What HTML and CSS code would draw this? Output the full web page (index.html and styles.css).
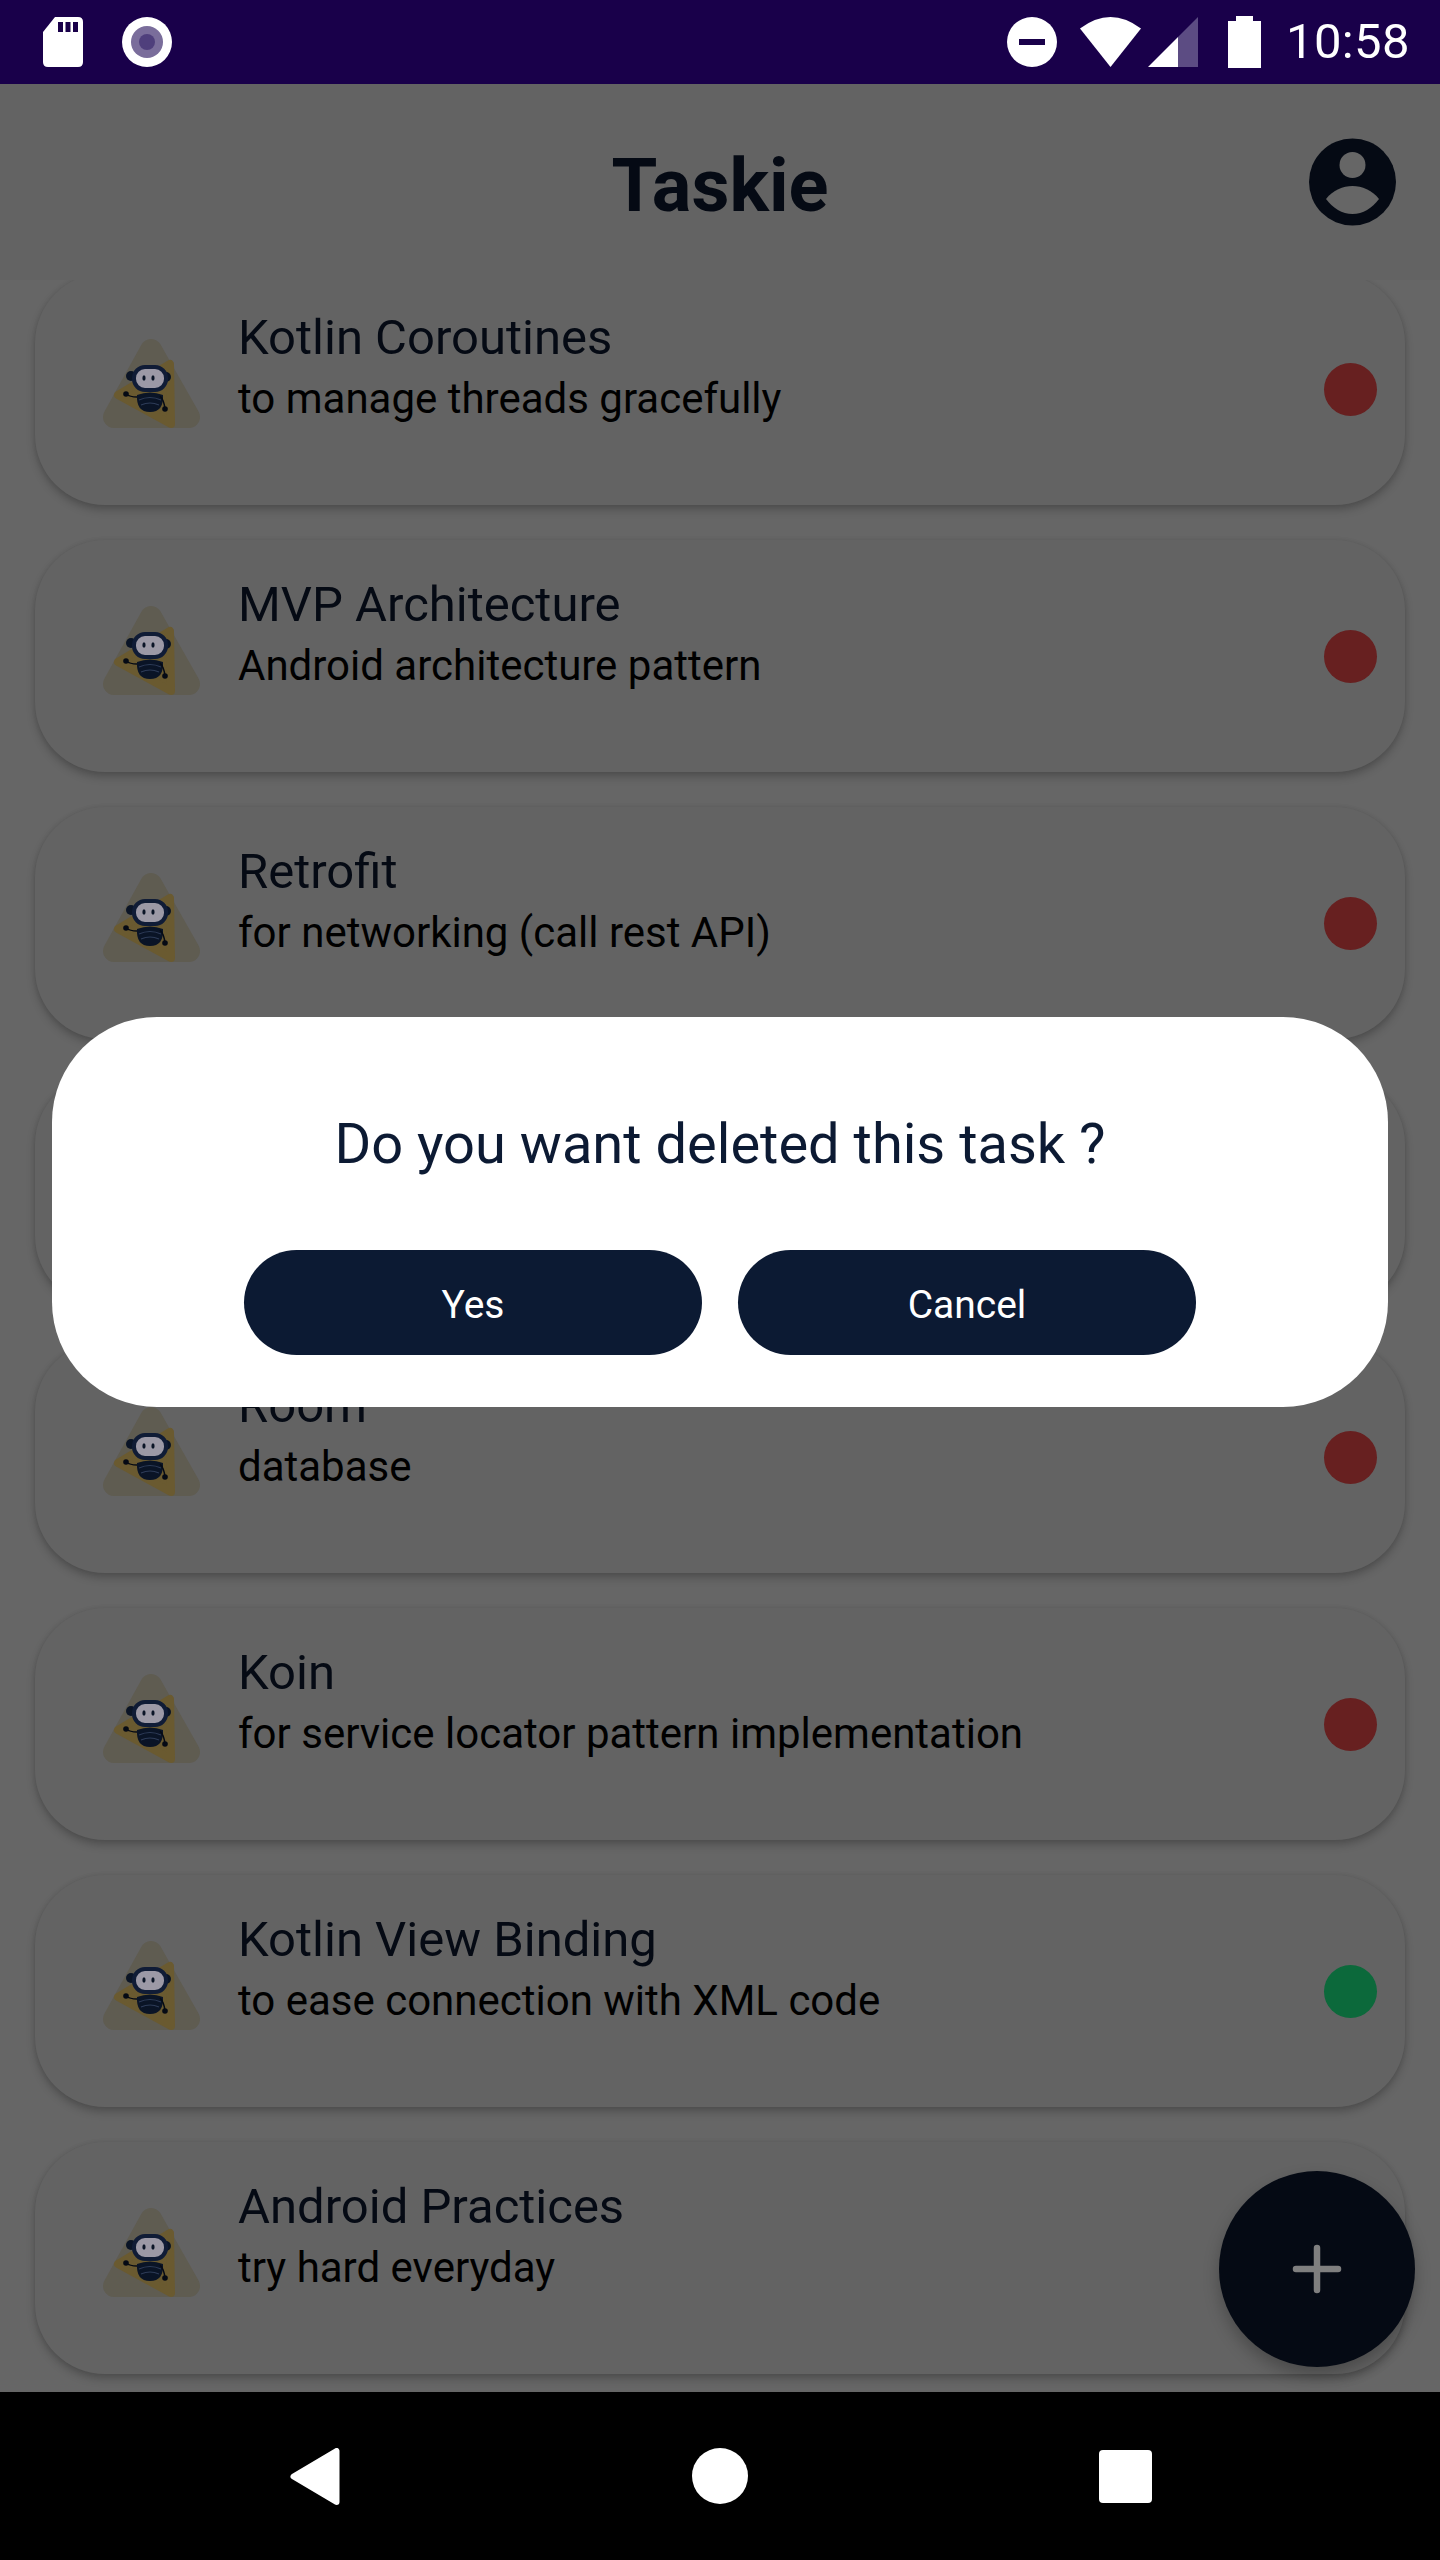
FILE: index.html

```html
<!DOCTYPE html>
<html lang="en">
<head>
  <meta charset="UTF-8">
  <title>Taskie</title>
  <link rel="stylesheet" href="styles.css">
</head>
<body>
  <svg class="defs" width="0" height="0">
    <symbol id="logo" viewBox="100 339 105 100">
      <polygon points="151,350 114,417 189,417" fill="#5f5c51" stroke="#5f5c51" stroke-width="22" stroke-linejoin="round"/>
      <polygon points="118,395 170,364 171,424" fill="#6a5a30" stroke="#6a5a30" stroke-width="8" stroke-linejoin="round"/>
      <circle cx="131" cy="376" r="5" fill="#0a1426"/>
      <circle cx="166" cy="377" r="5" fill="#0a1426"/>
      <rect x="134" y="367" width="32" height="23" rx="11" fill="#9c99a6" stroke="#101c36" stroke-width="4"/>
      <ellipse cx="144" cy="378" rx="1.6" ry="2.8" fill="#0a1426"/>
      <ellipse cx="153" cy="378" rx="1.6" ry="2.8" fill="#0a1426"/>
      <path d="M137 395 Q150 390 163 395 Q164 412 150 412 Q136 412 137 395 Z" fill="#0a1426"/>
      <path d="M139 400 Q150 395 161 400 M141 405 Q150 401 159 405" fill="none" stroke="#2e3c58" stroke-width="1.2"/>
      <path d="M126 394 Q130 397 137 397 M160 396 Q164 400 165 409" fill="none" stroke="#050a14" stroke-width="1.5"/>
      <circle cx="126" cy="394" r="2.8" fill="#050a14"/>
      <circle cx="165" cy="409" r="2.8" fill="#050a14"/>
    </symbol>
  </svg>

  <div class="phone">
    <div class="status-bar">
      <div class="status-left">
        <svg width="40" height="50" viewBox="0 0 40 50">
          <path d="M12 0H35q5 0 5 5V45q0 5-5 5H5q-5 0-5-5V15Z" fill="#fff"/>
          <path d="M15 5h5v10h-5zM22.500 5h5v10h-5zM30 5h5v10h-5z" fill="#19004a"/>
        </svg>
        <svg width="50" height="50" viewBox="0 0 50 50">
          <circle cx="25" cy="25" r="25" fill="#fff"/>
          <circle cx="25" cy="25" r="16" fill="#7a6d9b"/>
          <circle cx="25" cy="25" r="8" fill="#4f3f7c"/>
        </svg>
      </div>
      <div class="status-right">
        <svg width="50" height="50" viewBox="0 0 50 50">
          <circle cx="25" cy="25" r="25" fill="#fff"/>
          <rect x="12" y="22" width="26" height="6" fill="#19004a"/>
        </svg>
        <svg class="wifi" width="61" height="50" viewBox="0 0 61 50">
          <path d="M30.500 50L0 11.500Q30.500-11.500 61 11.500Z" fill="#fff"/>
        </svg>
        <svg class="signal" width="50" height="50" viewBox="0 0 50 50">
          <path d="M0 50L30 20V50Z" fill="#fff"/>
          <path d="M30 20L50 0V50H30Z" fill="#5c4c83"/>
        </svg>
        <svg class="battery" width="33" height="52" viewBox="0 0 33 52">
          <path d="M8 0H25V5H33V52H0V5H8Z" fill="#fff"/>
        </svg>
        <span class="clock">10:58</span>
      </div>
    </div>

    <main class="main">
      <header class="app-bar">
        <h1 class="app-title">Taskie</h1>
        <svg class="avatar" width="87" height="88" viewBox="0 0 87 88">
          <circle cx="43.500" cy="44" r="43.500" fill="#050a14"/>
          <circle cx="43.500" cy="27" r="13" fill="#666"/>
          <path d="M17 61C24 52 34 48 43.500 48S63 52 70 61C63 70 54 76 43.500 76S24 70 17 61Z" fill="#666"/>
        </svg>
      </header>

      <div class="task-list">
        <div class="task-scroll">
          <div class="task-card">
            <svg class="task-logo"><use href="#logo"/></svg>
            <div class="task-text">
              <div class="task-title">Kotlin Coroutines</div>
              <div class="task-desc">to manage threads gracefully</div>
            </div>
            <span class="dot dot-red"></span>
          </div>
          <div class="task-card">
            <svg class="task-logo"><use href="#logo"/></svg>
            <div class="task-text">
              <div class="task-title">MVP Architecture</div>
              <div class="task-desc">Android architecture pattern</div>
            </div>
            <span class="dot dot-red"></span>
          </div>
          <div class="task-card">
            <svg class="task-logo"><use href="#logo"/></svg>
            <div class="task-text">
              <div class="task-title">Retrofit</div>
              <div class="task-desc">for networking (call rest API)</div>
            </div>
            <span class="dot dot-red"></span>
          </div>
          <div class="task-card">
            <svg class="task-logo"><use href="#logo"/></svg>
            <div class="task-text"></div>
            <span class="dot dot-red"></span>
          </div>
          <div class="task-card">
            <svg class="task-logo"><use href="#logo"/></svg>
            <div class="task-text">
              <div class="task-title">Room</div>
              <div class="task-desc">database</div>
            </div>
            <span class="dot dot-red"></span>
          </div>
          <div class="task-card">
            <svg class="task-logo"><use href="#logo"/></svg>
            <div class="task-text">
              <div class="task-title">Koin</div>
              <div class="task-desc">for service locator pattern implementation</div>
            </div>
            <span class="dot dot-red"></span>
          </div>
          <div class="task-card">
            <svg class="task-logo"><use href="#logo"/></svg>
            <div class="task-text">
              <div class="task-title">Kotlin View Binding</div>
              <div class="task-desc">to ease connection with XML code</div>
            </div>
            <span class="dot dot-green"></span>
          </div>
          <div class="task-card">
            <svg class="task-logo"><use href="#logo"/></svg>
            <div class="task-text">
              <div class="task-title">Android Practices</div>
              <div class="task-desc">try hard everyday</div>
            </div>
            <span class="dot dot-red"></span>
          </div>
        </div>
      </div>

      <button class="fab">
        <svg width="50" height="50" viewBox="0 0 50 50">
          <path d="M25 4V46M4 25H46" fill="none" stroke="#7f7f7f" stroke-width="6.500" stroke-linecap="round"/>
        </svg>
      </button>

      <div class="dialog">
        <p class="dialog-text">Do you want deleted this task ?</p>
        <div class="dialog-actions">
          <button class="dialog-btn">Yes</button>
          <button class="dialog-btn">Cancel</button>
        </div>
      </div>
    </main>

    <nav class="nav-bar">
      <svg width="50" height="57" viewBox="0 0 50 57">
        <polygon points="3.500,28.500 46.500,3 46.500,54" fill="#fff" stroke="#fff" stroke-width="6" stroke-linejoin="round"/>
      </svg>
      <span class="nav-home"></span>
      <span class="nav-recent"></span>
    </nav>
  </div>
</body>
</html>
```

FILE: styles.css

```css
/* colours below are the dimmed ones, as they look behind the dialog */
* {
  box-sizing: border-box;
}
body {
  margin: 0;
  background: #000;
  font-family: Roboto, "Noto Sans", sans-serif;
}
.defs {
  position: absolute;
}
.phone {
  width: 1440px;
  height: 2560px;
  display: flex;
  flex-direction: column;
  overflow: hidden;
}

/* status bar */
.status-bar {
  height: 84px;
  flex: none;
  background: #19004a;
  display: flex;
  align-items: center;
  justify-content: space-between;
  padding: 0 30px 0 43px;
}
.status-left,
.status-right {
  display: flex;
  align-items: center;
}
.status-left {
  gap: 39px;
}
.wifi {
  margin-left: 23px;
}
.signal {
  margin-left: 7px;
}
.battery {
  margin-left: 30px;
}
.clock {
  margin-left: 25px;
  color: #fff;
  font-size: 49px;
  letter-spacing: 0.4px;
  line-height: 84px;
}

/* main area */
.main {
  flex: 1;
  position: relative;
  background: #666;
  display: flex;
  flex-direction: column;
  min-height: 0;
}
.app-bar {
  height: 196px;
  flex: none;
  background: #636363;
  display: grid;
  grid-template-columns: 1fr auto 1fr;
  align-items: center;
  padding: 0 44px;
}
.app-title {
  grid-column: 2;
  margin: 0;
  padding-top: 6px;
  color: #050a14;
  font-size: 74px;
  font-weight: 700;
}
.avatar {
  grid-column: 3;
  justify-self: end;
}

/* list */
.task-list {
  flex: 1;
  overflow: hidden;
  min-height: 0;
}
.task-scroll {
  margin-top: -7px;
  padding: 0 35px;
  display: flex;
  flex-direction: column;
  gap: 35px;
}
.task-card {
  height: 232px;
  flex: none;
  background: #636363;
  border-radius: 70px;
  box-shadow: 0 5px 8px rgba(0, 0, 0, 0.22), 0 0 4px rgba(0, 0, 0, 0.08);
  display: flex;
  align-items: center;
  padding: 0 28px 0 65px;
}
.task-logo {
  width: 105px;
  height: 100px;
  flex: none;
}
.task-text {
  flex: 1;
  align-self: flex-start;
  padding: 35px 0 0 33px;
}
.task-title {
  color: #050a14;
  font-size: 49px;
  line-height: 59px;
}
.task-desc {
  margin-top: 2px;
  color: #000;
  font-size: 42px;
  line-height: 59px;
}
.dot {
  width: 53px;
  height: 53px;
  flex: none;
  border-radius: 50%;
}
.dot-red {
  background: #672020;
}
.dot-green {
  background: #0c693b;
}

/* floating button */
.fab {
  position: absolute;
  right: 25px;
  bottom: 25px;
  width: 196px;
  height: 196px;
  border: none;
  border-radius: 50%;
  background: #050a14;
  box-shadow: 0 8px 16px rgba(0, 0, 0, 0.25);
  display: flex;
  align-items: center;
  justify-content: center;
  padding: 0;
}

/* dialog */
.dialog {
  position: absolute;
  top: 933px;
  left: 52px;
  right: 52px;
  height: 390px;
  background: #fff;
  border-radius: 105px;
  padding-top: 96px;
  display: flex;
  flex-direction: column;
  align-items: center;
}
.dialog-text {
  margin: 0;
  color: #0c1a33;
  font-size: 56px;
  line-height: 62px;
}
.dialog-actions {
  margin-top: 75px;
  display: flex;
  gap: 36px;
}
.dialog-btn {
  width: 458px;
  height: 105px;
  border: none;
  border-radius: 53px;
  background: #0c1a33;
  color: #fff;
  font-family: inherit;
  font-size: 39px;
  padding: 5px 0 0;
}

/* navigation bar */
.nav-bar {
  height: 168px;
  flex: none;
  background: #000;
  display: grid;
  grid-template-columns: repeat(3, 1fr);
  align-items: center;
  justify-items: center;
  padding: 0 112px;
}
.nav-home {
  width: 56px;
  height: 56px;
  border-radius: 50%;
  background: #fff;
}
.nav-recent {
  width: 53px;
  height: 53px;
  border-radius: 4px;
  background: #fff;
}
```
